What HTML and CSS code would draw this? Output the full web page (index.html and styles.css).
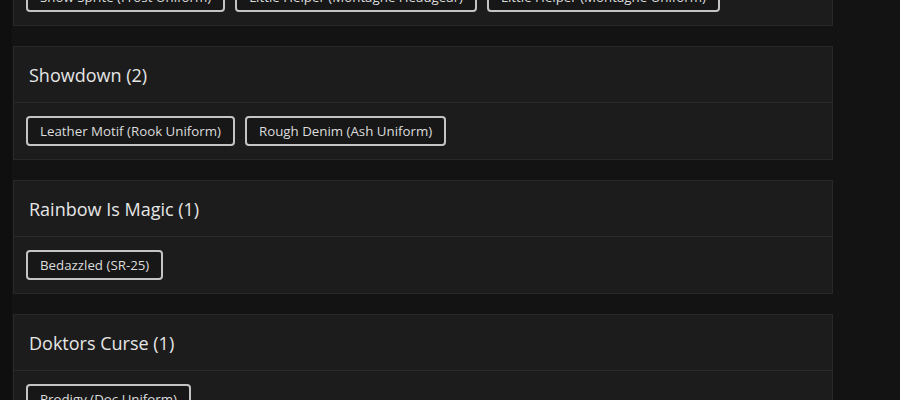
FILE: index.html
```html
<!DOCTYPE html>
<html lang="en">
<head>
    <meta charset="UTF-8">
    <meta name="viewport" content="width=device-width, initial-scale=1.0">
    <title>Skin Sets</title>
    <link rel="stylesheet" href="styles.css">
</head>
<body>
    <div class="page">
        <div class="sets">
            <div class="set">
                <div class="set-header">Winter Wonderland (3)</div>
                <div class="set-items">
                    <button class="item">Snow Sprite (Frost Uniform)</button>
                    <button class="item">Little Helper (Montagne Headgear)</button>
                    <button class="item">Little Helper (Montagne Uniform)</button>
                </div>
            </div>

            <div class="set">
                <div class="set-header">Showdown (2)</div>
                <div class="set-items">
                    <button class="item">Leather Motif (Rook Uniform)</button>
                    <button class="item">Rough Denim (Ash Uniform)</button>
                </div>
            </div>

            <div class="set">
                <div class="set-header">Rainbow Is Magic (1)</div>
                <div class="set-items">
                    <button class="item">Bedazzled (SR-25)</button>
                </div>
            </div>

            <div class="set">
                <div class="set-header">Doktors Curse (1)</div>
                <div class="set-items">
                    <button class="item">Prodigy (Doc Uniform)</button>
                </div>
            </div>
        </div>
    </div>
</body>
</html>
```

FILE: styles.css
```css
body {
    margin: 0;
    background-color: #131313;
    font-family: "Open Sans", "Noto Sans", sans-serif;
    color: #e4e4e4;
    overflow: hidden;
}

.page {
    display: flex;
    border-left: 12px solid #0f0f0f;
}

.sets {
    width: 820px;
    margin-left: 1px;
    margin-top: -88px;
    display: flex;
    flex-direction: column;
    gap: 20px;
}

.set {
    background-color: #1c1c1c;
    border: 1px solid #282828;
}

.set-header {
    height: 55px;
    padding: 0 15px;
    display: flex;
    align-items: center;
    font-size: 18px;
    font-weight: 500;
    color: #e6e6e6;
    border-bottom: 1px solid #2a2a2a;
}

.set-items {
    display: flex;
    flex-wrap: wrap;
    gap: 10px;
    padding: 13px 12px;
}

.item {
    height: 30px;
    padding: 0 12px;
    font-family: inherit;
    font-size: 13.3px;
    color: #dcdcdc;
    background-color: #171717;
    border: 2px solid #c4c4c4;
    border-radius: 4px;
    cursor: pointer;
}

.item:hover {
    border-color: #ffffff;
}
```
